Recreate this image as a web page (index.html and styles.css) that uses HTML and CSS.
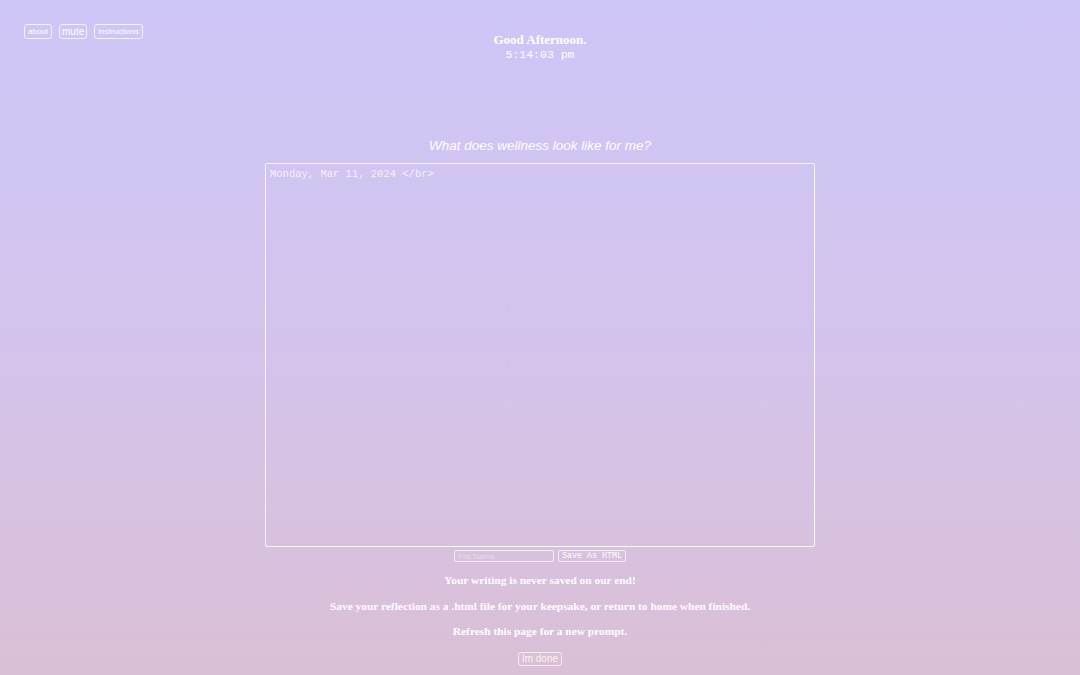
FILE: index.html
```html
<!DOCTYPE html>
<html>
<head>
<meta charset="utf-8">
<link rel="stylesheet" href="styles.css">
</head>
<body>
<div class="page">
  <nav class="topnav">
    <button class="nav-btn">about</button>
    <button class="nav-btn mute">mute</button>
    <button class="nav-btn">instructions</button>
  </nav>
  <header class="greeting">
    <div class="hello">Good Afternoon.</div>
    <div class="clock">5:14:03 pm</div>
  </header>
  <main class="writer">
    <div class="prompt">What does wellness look like for me?</div>
    <textarea class="journal" placeholder="Monday, Mar 11, 2024 </br>"></textarea>
    <div class="save-row">
      <input class="file-name" type="text" placeholder="File Name">
      <button class="save-btn">Save As HTML</button>
    </div>
    <p class="note">Your writing is never saved on our end!</p>
    <p class="note">Save your reflection as a .html file for your keepsake, or return to home when finished.</p>
    <p class="note">Refresh this page for a new prompt.</p>
    <button class="done-btn">Im done</button>
  </main>
</div>
</body>
</html>
```

FILE: styles.css
```css
html, body {
  margin: 0;
  padding: 0;
  height: 100%;
}
body {
  background: linear-gradient(to bottom, #cec6f7 0%, #d3c3ec 50%, #dac0d6 100%);
  color: #fff;
  overflow: hidden;
}
.page {
  position: relative;
  width: 1080px;
  height: 675px;
}
.topnav {
  position: absolute;
  left: 24px;
  top: 24px;
  display: flex;
  gap: 7px;
  align-items: center;
}
.nav-btn {
  background: transparent;
  border: 1px solid rgba(255,255,255,0.75);
  border-radius: 3px;
  color: #fff;
  font-family: "Liberation Sans", Arial, sans-serif;
  font-size: 8px;
  padding: 0 3px;
  height: 15px;
  line-height: 13px;
}
.nav-btn.mute {
  font-size: 10px;
  padding: 0 2px;
}
.greeting {
  padding-top: 32px;
  text-align: center;
}
.hello {
  font-family: "Liberation Serif", "Times New Roman", serif;
  font-weight: bold;
  font-size: 13px;
  line-height: 15px;
}
.clock {
  font-family: "Liberation Mono", "Courier New", monospace;
  font-size: 11.5px;
  line-height: 15px;
}
.writer {
  display: flex;
  flex-direction: column;
  align-items: center;
  padding-top: 76px;
}
.prompt {
  font-family: "Liberation Sans", Arial, sans-serif;
  font-style: italic;
  font-size: 13.5px;
  line-height: 16px;
  margin-bottom: 9px;
}
.journal {
  box-sizing: border-box;
  width: 550px;
  height: 384px;
  background: transparent;
  border: 1px solid rgba(255,255,255,0.85);
  border-radius: 2px;
  padding: 4px;
  margin: 0;
  color: #fff;
  font-family: "Liberation Mono", "Courier New", monospace;
  font-size: 10.5px;
  resize: none;
  outline: none;
}
.journal::placeholder {
  color: rgba(255,255,255,0.8);
}
.save-row {
  display: flex;
  gap: 4px;
  margin-top: 3px;
  margin-left: 0;
}
.file-name {
  box-sizing: border-box;
  width: 100px;
  height: 12px;
  background: transparent;
  border: 1px solid rgba(255,255,255,0.7);
  border-radius: 2px;
  padding: 0 3px;
  font-family: "Liberation Sans", Arial, sans-serif;
  font-size: 8px;
  color: #fff;
}
.file-name::placeholder {
  color: rgba(255,255,255,0.45);
}
.save-btn {
  box-sizing: border-box;
  height: 12px;
  background: transparent;
  border: 1px solid rgba(255,255,255,0.7);
  border-radius: 2px;
  padding: 0 3px;
  color: #fff;
  font-family: "Liberation Mono", "Courier New", monospace;
  font-size: 8.3px;
  line-height: 10px;
}
.note {
  font-family: "Liberation Serif", "Times New Roman", serif;
  font-weight: bold;
  font-size: 11.4px;
  line-height: 14px;
  margin: 0;
}
.note:first-of-type {
  margin-top: 11px;
}
.note + .note {
  margin-top: 11.5px;
}
.done-btn {
  margin-top: 14px;
  background: transparent;
  border: 1px solid rgba(255,255,255,0.7);
  border-radius: 3px;
  color: rgba(255,255,255,0.85);
  font-family: "Liberation Sans", Arial, sans-serif;
  font-size: 10px;
  height: 14px;
  line-height: 12px;
  padding: 0 3px;
}
```
